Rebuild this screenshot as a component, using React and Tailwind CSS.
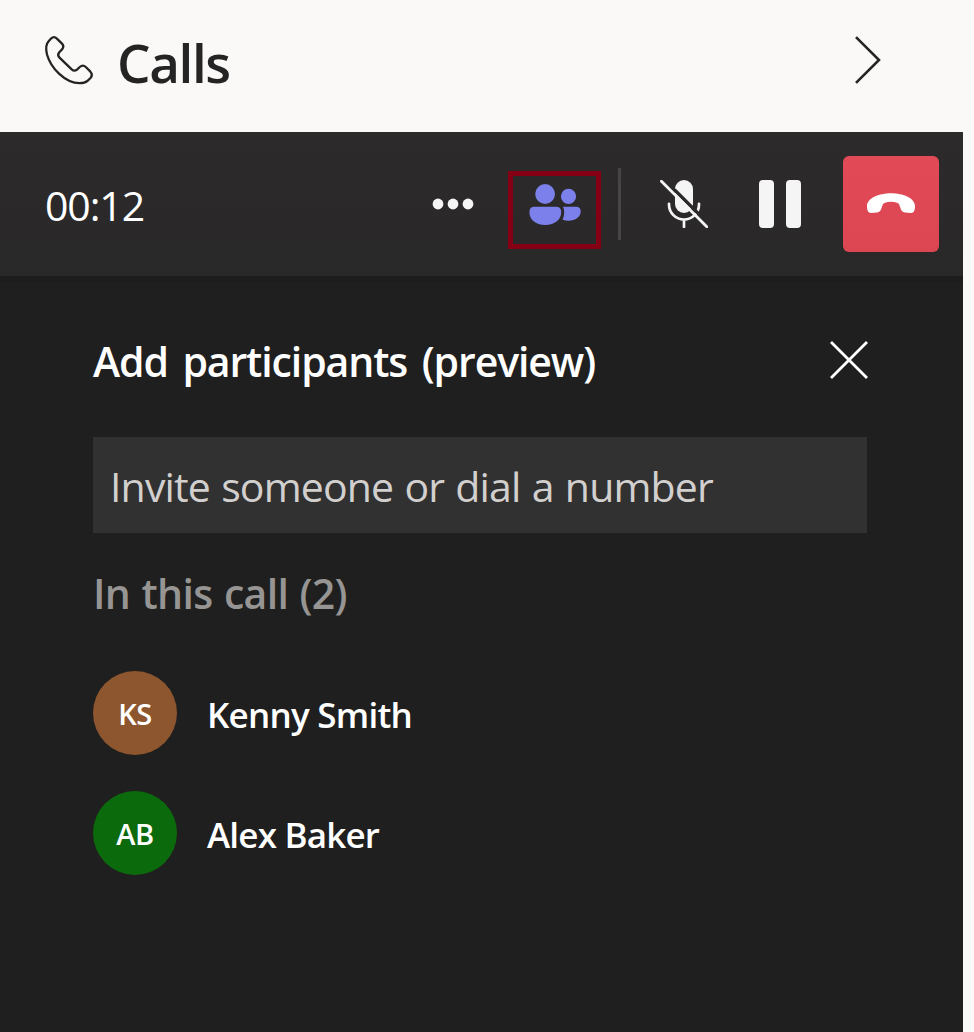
const participants = [
  { initials: 'KS', name: 'Kenny Smith', color: 'bg-[#8e562e]', tracking: 'tracking-[-0.75px]' },
  { initials: 'AB', name: 'Alex Baker', color: 'bg-[#0b6a0b]', tracking: 'tracking-[-0.8px]' },
];

function PhoneIcon() {
  return (
    <svg className="h-[60px] w-[60px]" viewBox="0 0 60 60" fill="none" stroke="#242424" strokeWidth="2.3" strokeLinejoin="round">
      <path d="M16.9 6.6Q14 3.8 11.3 6.3L8.6 9.2C6.2 11.8 5.4 16.2 7 22.5C9 29.5 13.5 36.5 19 41.6C25 47.2 32 51.2 39.5 51.2C43 51.2 45.5 50.6 47.5 48.8L50.5 46Q53.2 42.8 50.2 39.4L45.8 35Q42.8 32.2 39.8 35L37 37.6Q34.3 39.8 31.7 37.4L19.5 25.6Q16.9 23 19.3 20.2L22 17.4Q24.6 14.3 22 11.6Z" />
    </svg>
  );
}

function PeopleIcon() {
  return (
    <svg className="h-[42px] w-[52px]" viewBox="0 0 52 42" fill="#7b80eb">
      <circle cx="16.1" cy="10" r="9.9" />
      <circle cx="39.5" cy="12.4" r="7.6" />
      <path d="M5.5 22.7H27Q32.2 22.7 32.2 28C32.2 35.5 26 41 16.2 41S.4 35.5.4 28Q.4 22.7 5.5 22.7Z" />
      <path d="M34 22.7H47Q51.7 22.7 51.7 27.3C51.7 33 46.5 36.7 39.5 36.7Q36.2 36.7 33.6 35.7Q35.2 32 35.2 28Q35.2 25 34 22.7Z" />
    </svg>
  );
}

function MicOffIcon() {
  return (
    <svg className="h-12 w-12" viewBox="0 0 48 48" fill="none" strokeLinecap="round">
      <rect x="15" y="0" width="18" height="33" rx="9" fill="#f5f5f5" />
      <path d="M9 23.8V24.5A15 15 0 0 0 39 24.5V23.8M24 40V47" stroke="#f5f5f5" strokeWidth="2.7" />
      <path d="M14.4 9.8L42.4 37.6" stroke="#2b292a" strokeWidth="3.4" strokeLinecap="butt" />
      <path d="M1.4 1.2L46.8 46.8" stroke="#f5f5f5" strokeWidth="2.8" />
    </svg>
  );
}

function HangUpIcon() {
  return (
    <svg className="h-[21px] w-12" viewBox="0 0 48 21" fill="#fff">
      <path d="M24 .2C36 .2 48 5 48 13C48 18 46.6 20.2 43.5 19.9L38 19.4C35.4 19.1 34.4 18 33.6 15.6L32.3 11.8Q31.9 10.4 30.6 9.9Q24 7.6 17.4 9.9Q16.1 10.4 15.7 11.8L14.4 15.6C13.6 18 12.6 19.1 10 19.4L4.5 19.9C1.4 20.2 0 18 0 13C0 5 12 .2 24 .2Z" />
    </svg>
  );
}

export default function App() {
  return (
    <div className="h-[1032px] w-[974px] overflow-hidden bg-[#faf9f8] font-['Open_Sans','Noto_Sans',sans-serif]">
      <header className="flex h-[132px] items-start justify-between pr-[91px] pl-10">
        <div className="flex items-start">
          <div className="pt-8"><PhoneIcon /></div>
          <h1 className="ml-[17px] pt-[27px] text-[53px] leading-[72px] font-semibold tracking-[-1.4px] text-[#242424]">Calls</h1>
        </div>
        <svg className="mt-[35px] h-[50px] w-[30px]" viewBox="0 0 30 50" fill="none" stroke="#242424" strokeWidth="2.6">
          <path d="M3 2.2L26 25L3 47.8" />
        </svg>
      </header>
      <main className="h-[900px] w-[963px] bg-[#1f1f1f]">
        <section className="flex h-36 items-center bg-linear-to-b from-[#2d2a2b] to-[#292828] pr-6 pl-[45px]">
          <time className="w-[387px] pt-0.5 text-[41px] leading-[56px] tracking-[-1.1px] text-white">00:12</time>
          <svg className="h-3 w-[42px]" viewBox="0 0 42 12" fill="#f5f5f5">
            <circle cx="6" cy="6" r="5.4" /><circle cx="21" cy="6" r="5.4" /><circle cx="36" cy="6" r="5.4" />
          </svg>
          <button className="mt-3 ml-[34px] flex h-[78px] w-[93px] items-start justify-center border-[5px] border-[#850014] pt-2">
            <PeopleIcon />
          </button>
          <div className="ml-[17px] h-[72px] w-[3px] bg-[#484644]" />
          <div className="ml-[39px]"><MicOffIcon /></div>
          <div className="ml-[51px] flex gap-3">
            <span className="h-12 w-[15px] rounded-[4px] bg-[#f5f5f5]" />
            <span className="h-12 w-[15px] rounded-[4px] bg-[#f5f5f5]" />
          </div>
          <button className="ml-auto flex h-24 w-24 items-center justify-center rounded-[6px] bg-linear-to-b from-[#e14a56] to-[#dc4652] pb-px">
            <HangUpIcon />
          </button>
        </section>
        <div className="h-1.5 bg-[#1c1c1c]" />
        <section className="px-[93px] pr-24 pt-[50px]">
          <div className="flex h-[58px] items-start justify-between">
            <h2 className="text-[41px] leading-[58px] font-semibold tracking-[-1.1px] text-white [word-spacing:5px]">Add participants (preview)</h2>
            <svg className="mt-2 mr-[-1px] h-10 w-[38px]" viewBox="0 0 38 40" fill="none" stroke="#fff" strokeWidth="2.8">
              <path d="M1 2L37 38M37 2L1 38" />
            </svg>
          </div>
          <div className="mt-[47px] flex h-24 items-center bg-[#323131] pt-1 pl-[17px] text-[41px] tracking-[-0.85px] text-[#d2d0ce] [word-spacing:1.4px]">
            Invite someone or dial a number
          </div>
          <h3 className="mt-[31px] text-[41px] leading-[58px] font-semibold tracking-[-0.7px] text-[#979593] [word-spacing:1.5px]">In this call (2)</h3>
          <ul className="mt-[49px] flex flex-col gap-9">
            {participants.map((p) => (
              <li key={p.name} className="flex h-[84px] items-center">
                <span className={`flex h-[84px] w-[84px] items-center justify-center rounded-full pt-0.5 text-[29px] font-semibold tracking-[-0.4px] text-white ${p.color}`}>{p.initials}</span>
                <span className={`ml-[30px] pt-1 text-[35px] font-semibold text-white ${p.tracking}`}>{p.name}</span>
              </li>
            ))}
          </ul>
        </section>
      </main>
    </div>
  );
}
